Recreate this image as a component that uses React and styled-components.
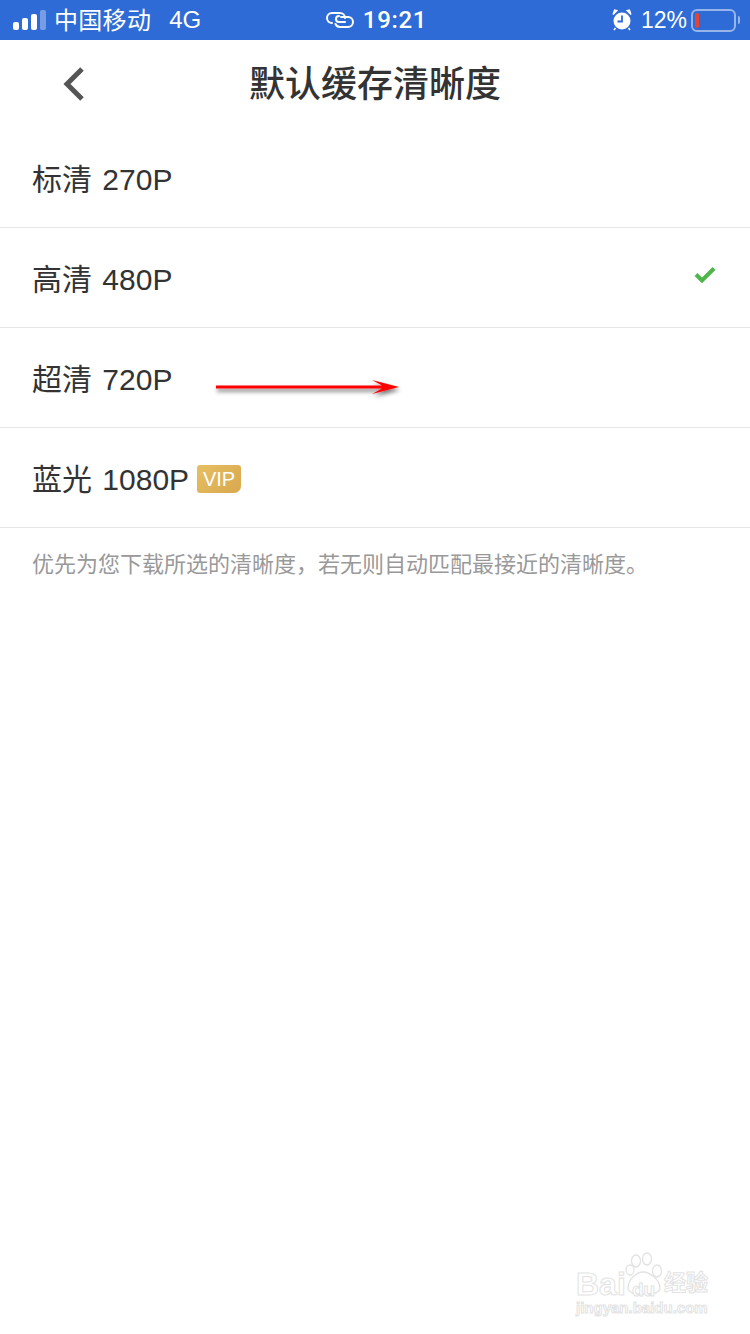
import styled, { createGlobalStyle } from "styled-components";

const Global = createGlobalStyle`
  html, body {
    margin: 0;
    padding: 0;
    background: #fff;
  }
  body {
    font-family: "Liberation Sans", "Noto Sans CJK SC", sans-serif;
  }
`;

const Page = styled.div`
  position: relative;
  width: 750px;
  height: 1334px;
  overflow: hidden;
  background: #fff;
`;

const StatusBar = styled.div`
  height: 40px;
  background: #2f6bd6;
  color: #fff;
  display: grid;
  grid-template-columns: 1fr auto 1fr;
  align-items: center;
  padding: 0 14px 0 13px;
  box-sizing: border-box;
  font-size: 24px;
`;

const StatusLeft = styled.div`
  display: flex;
  align-items: center;
`;

const Carrier = styled.span`
  margin-left: 8px;
  margin-bottom: 3px;
  letter-spacing: 0.3px;
`;

const Network = styled.span`
  margin-left: 18px;
`;

const StatusCenter = styled.div`
  display: flex;
  align-items: center;
  gap: 9px;
  margin-left: 4px;
  font-family: Roboto, "Liberation Sans", sans-serif;
  font-weight: 500;
  letter-spacing: 0.7px;
`;

const StatusRight = styled.div`
  display: flex;
  align-items: center;
  justify-content: flex-end;
`;

const Percent = styled.span`
  margin-left: 9px;
  margin-right: 4px;
  font-size: 23px;
`;

const Battery = styled.div`
  position: relative;
  box-sizing: border-box;
  width: 45px;
  height: 23px;
  border: 2px solid rgba(255, 255, 255, 0.5);
  border-radius: 6px;
  padding: 2px;

  &::after {
    content: "";
    position: absolute;
    right: -6px;
    top: 5px;
    width: 2px;
    height: 8px;
    border-radius: 0 2px 2px 0;
    background: rgba(255, 255, 255, 0.5);
  }
`;

const BatteryLevel = styled.div`
  width: 4px;
  height: 100%;
  border-radius: 2px;
  background: #e8432e;
`;

const NavBar = styled.div`
  position: relative;
  height: 88px;
  display: flex;
  align-items: center;
  justify-content: center;
`;

const BackButton = styled.div`
  position: absolute;
  left: 62px;
  top: 26px;
  display: flex;
`;

const Title = styled.h1`
  margin: 2px 0 0;
  font-size: 36px;
  font-weight: 500;
  color: #333;
  line-height: 86px;
`;

const List = styled.div`
  display: flex;
  flex-direction: column;
`;

const Row = styled.div`
  height: 100px;
  box-sizing: border-box;
  padding: 0 34px 0 32px;
  border-bottom: 1px solid #e6e6e6;
  display: flex;
  align-items: center;
  justify-content: space-between;
`;

const RowLabel = styled.div`
  display: flex;
  align-items: center;
  font-size: 30px;
  word-spacing: 2px;
  color: #333;
  margin-bottom: 2px;
`;

const Tick = styled.svg`
  margin-bottom: 6px;
`;

const VipBadge = styled.span`
  margin: 4px 0 0 8px;
  width: 44px;
  height: 28px;
  border-radius: 3px 3px 7px 3px;
  background: linear-gradient(135deg, #e6bf63, #d9a84e);
  color: #fff;
  font-size: 20px;
  line-height: 28px;
  text-align: center;
`;

const Note = styled.p`
  margin: 0;
  padding: 24px 32px 0;
  font-size: 22px;
  line-height: 26px;
  color: #999;
`;

const Annotation = styled.svg`
  position: absolute;
  left: 210px;
  top: 372px;
`;

const Watermark = styled.div`
  position: absolute;
  left: 574px;
  top: 1252px;
  width: 140px;
  height: 72px;
  color: #fff;
`;

const WatermarkBrand = styled.span`
  position: absolute;
  font-size: ${(p) => p.$size}px;
  font-weight: 700;
  left: ${(p) => p.$x}px;
  top: ${(p) => p.$y}px;
  line-height: 1;
  white-space: nowrap;
  color: #fff;
  -webkit-text-stroke: 1px #e3e3e3;
`;

const Paw = styled.svg`
  position: absolute;
  left: 50px;
  top: 0;
`;

function SignalBars() {
  return (
    <svg width="33" height="22" viewBox="0 0 33 22">
      <rect x="0" y="13" width="6" height="8" rx="2" fill="#fff" />
      <rect x="9" y="9" width="6" height="12" rx="2" fill="#fff" />
      <rect x="18" y="5" width="6" height="16" rx="2" fill="#fff" />
      <rect x="27" y="1" width="6" height="20" rx="2" fill="#fff" fillOpacity="0.35" />
    </svg>
  );
}

function LinkIcon() {
  return (
    <svg width="28" height="18" viewBox="0 0 28 18" fill="none" stroke="#fff" strokeWidth="2" strokeLinecap="round">
      <path d="M6 12a5 5 0 0 1 0-10h8a5 5 0 0 1 5 5" />
      <path d="M19 11h-6a3 3 0 0 1 0-6" />
      <path d="M15 6h7a5 5 0 0 1 0 10h-8a5 5 0 0 1-4.5-3" />
    </svg>
  );
}

function AlarmIcon() {
  return (
    <svg width="20" height="22" viewBox="0 0 20 22">
      <circle cx="10" cy="12" r="8.5" fill="#fff" />
      <path d="M10 6.5V12.5H5.5" fill="none" stroke="#2f6bd6" strokeWidth="1.8" />
      <path d="M1 5.5 5 1.5 2.5 1Z M19 5.5 15 1.5 17.5 1Z" fill="#fff" stroke="#fff" strokeWidth="1.2" />
      <path d="M3.5 19 2 21 M16.5 19 18 21" stroke="#fff" strokeWidth="1.5" />
    </svg>
  );
}

function BackIcon() {
  return (
    <svg width="24" height="36" viewBox="0 0 24 36" fill="none">
      <path d="M20 3 5 18l15 15" stroke="#555" strokeWidth="5" />
    </svg>
  );
}

function CheckIcon() {
  return (
    <Tick width="22" height="18" viewBox="0 0 22 18" fill="none">
      <path d="M2 8.5 8 14.5 20 2.5" stroke="#4cb648" strokeWidth="4" />
    </Tick>
  );
}

const rows = [
  { label: "标清 270P" },
  { label: "高清 480P", selected: true },
  { label: "超清 720P" },
  { label: "蓝光 1080P", vip: true },
];

export default function App() {
  return (
    <Page>
      <Global />
      <StatusBar>
        <StatusLeft>
          <SignalBars />
          <Carrier>中国移动</Carrier>
          <Network>4G</Network>
        </StatusLeft>
        <StatusCenter>
          <LinkIcon />
          19:21
        </StatusCenter>
        <StatusRight>
          <AlarmIcon />
          <Percent>12%</Percent>
          <Battery>
            <BatteryLevel />
          </Battery>
        </StatusRight>
      </StatusBar>
      <NavBar>
        <BackButton>
          <BackIcon />
        </BackButton>
        <Title>默认缓存清晰度</Title>
      </NavBar>
      <List>
        {rows.map((row) => (
          <Row key={row.label}>
            <RowLabel>
              {row.label}
              {row.vip && <VipBadge>VIP</VipBadge>}
            </RowLabel>
            {row.selected && <CheckIcon />}
          </Row>
        ))}
      </List>
      <Note>优先为您下载所选的清晰度，若无则自动匹配最接近的清晰度。</Note>
      <Annotation width="200" height="32" viewBox="0 0 200 32">
        <defs>
          <filter id="arrowShadow" x="-10%" y="-100%" width="120%" height="300%">
            <feDropShadow dx="1" dy="3" stdDeviation="2" floodColor="#000" floodOpacity="0.55" />
          </filter>
        </defs>
        <path d="M6 13.5H172L162 8 189 15 162 22 172 16.5H6Z" fill="#f00" filter="url(#arrowShadow)" />
      </Annotation>
      <Watermark>
        <Paw width="44" height="44" viewBox="0 0 44 44" fill="#fff" stroke="#e3e3e3" strokeWidth="1.3">
          <ellipse cx="12" cy="9" rx="4.5" ry="6" />
          <ellipse cx="23" cy="7" rx="4.5" ry="6" />
          <ellipse cx="6" cy="18" rx="4" ry="5" />
          <ellipse cx="33" cy="19" rx="4.5" ry="6" />
          <path d="M4 36c0-8 8-16 15-16s17 8 17 16c0 5-6 6-16 6S4 41 4 36Z" />
        </Paw>
        <WatermarkBrand $size={32} $x={2} $y={16}>Bai</WatermarkBrand>
        <WatermarkBrand $size={19} $x={58} $y={28}>du</WatermarkBrand>
        <WatermarkBrand $size={22} $x={90} $y={20}>经验</WatermarkBrand>
        <WatermarkBrand $size={15} $x={2} $y={48}>jingyan.baidu.com</WatermarkBrand>
      </Watermark>
    </Page>
  );
}
